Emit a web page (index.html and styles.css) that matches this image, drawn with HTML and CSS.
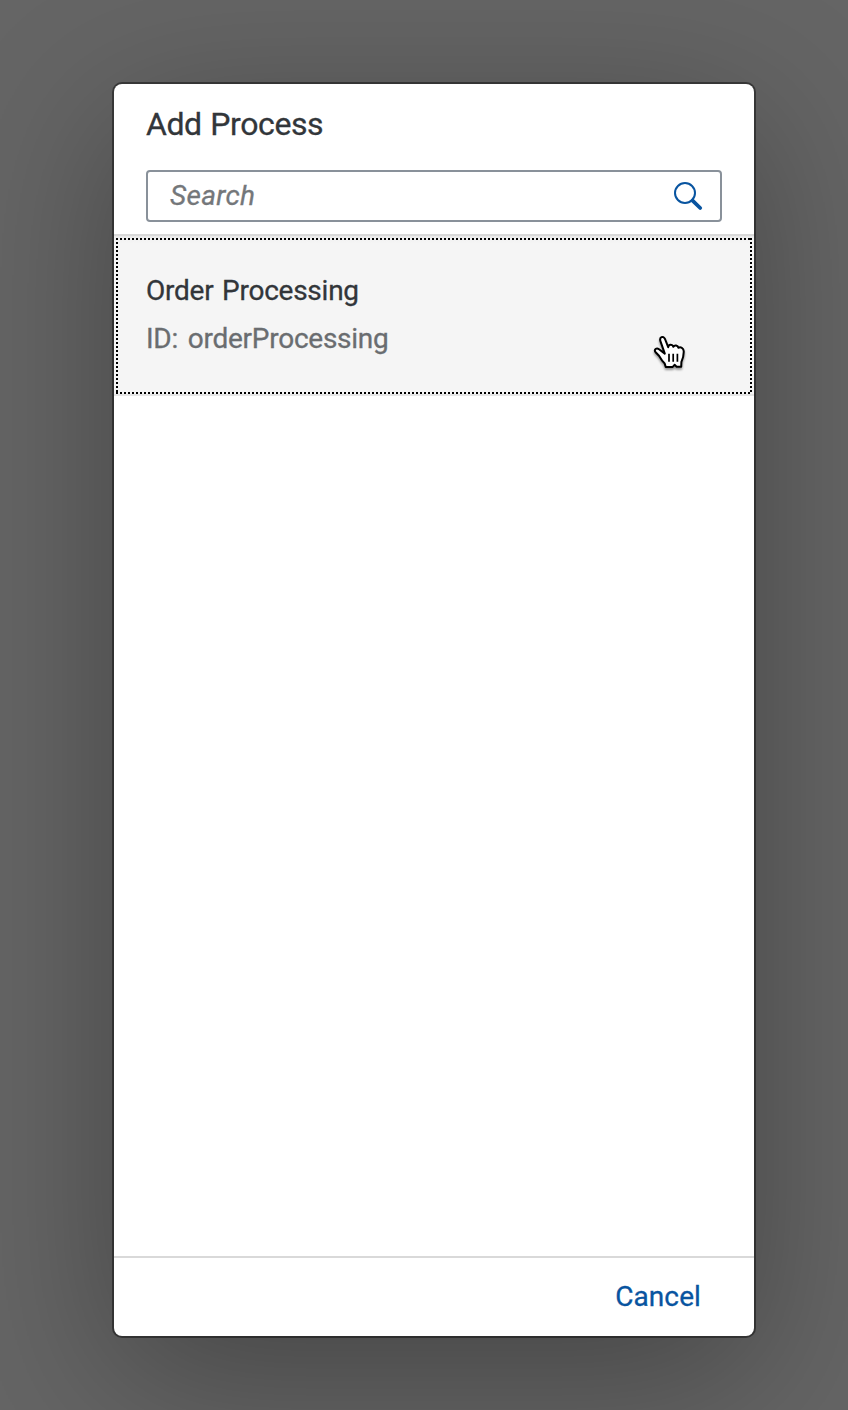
FILE: index.html
```html
<!DOCTYPE html>
<html lang="en">
<head>
<meta charset="utf-8">
<title>Add Process</title>
<link rel="stylesheet" href="styles.css">
</head>
<body class="overlay">
<section class="dialog" role="dialog" aria-labelledby="dialog-title">
  <header class="dialog-header">
    <h1 class="dialog-title" id="dialog-title">Add Process</h1>
    <div class="search-field">
      <span class="search-placeholder">Search</span>
      <svg class="search-icon" width="32" height="32" viewBox="0 0 32 32" aria-hidden="true">
        <circle cx="13" cy="13" r="10" fill="none" stroke="#0854a0" stroke-width="2"/>
        <path d="M20.6 20.6L28.2 28" fill="none" stroke="#0854a0" stroke-width="3.8" stroke-linecap="round"/>
      </svg>
    </div>
  </header>
  <main class="dialog-content">
    <div class="list-item">
      <div class="item-focus">
        <div class="item-title">Order Processing</div>
        <div class="item-id">ID: orderProcessing</div>
      </div>
      <svg class="cursor" width="40" height="44" viewBox="0 0 40 44" aria-hidden="true">
        <path d="M14.8 23.6L10.5 11.4C9 7.2 13.2 5.2 15 9L18.2 17.2C18.5 14.2 22.4 14 23.4 16.8C24.6 14.6 27.8 15.2 28.4 17.8C30.6 16.6 33.6 18 33.7 21C34 26 32.7 29 31.4 31.8L31.2 36.7H26.6L24.6 34.8L22.7 36.9H15.7L14.7 33.6C12.4 31.5 10.5 28.4 9 25.8L5.6 22.2C3.6 19.6 6.5 17.4 9 19.2Z" fill="#fff" stroke="#000" stroke-width="2" stroke-linejoin="round"/>
        <path d="M19 23.8V31.8M23.2 23.8V31.8M27.4 23.8V31.8" fill="none" stroke="#000" stroke-width="1.7"/>
      </svg>
    </div>
  </main>
  <footer class="dialog-footer">
    <button class="cancel-button" type="button">Cancel</button>
  </footer>
</section>
</body>
</html>
```
FILE: styles.css
```css
* {
  box-sizing: border-box;
}

.overlay {
  margin: 0;
  height: 1410px;
  padding: 84px 94px 74px 114px;
  background: #656565;
  font-family: Roboto, "Liberation Sans", sans-serif;
  font-size: 28px;
  -webkit-text-stroke: 0.3px currentColor;
  overflow: hidden;
}

.dialog {
  display: flex;
  flex-direction: column;
  height: 1252px;
  background: #fff;
  border-radius: 8px;
  box-shadow: 0 0 0 2px rgba(0, 0, 0, 0.42), 0 40px 160px rgba(0, 0, 0, 0.32);
}

.dialog-header {
  height: 152px;
  padding: 0 32px;
  border-bottom: 2px solid #d9d9d9;
}

.dialog-title {
  margin: 0;
  height: 86px;
  line-height: 80px;
  font-size: 32px;
  font-weight: 400;
  letter-spacing: -0.4px;
  word-spacing: 1px;
  color: #32363a;
}

.search-field {
  display: flex;
  align-items: center;
  justify-content: space-between;
  height: 52px;
  padding: 0 16px 0 22px;
  border: 2px solid #89919a;
  border-radius: 4px;
}

.search-placeholder {
  font-style: italic;
  line-height: 48px;
  letter-spacing: 0.3px;
  color: #74777a;
}

.search-icon {
  display: block;
}

.dialog-content {
  flex: 1;
}

.list-item {
  position: relative;
  height: 160px;
  padding: 2px;
  border-bottom: 2px solid #e5e5e5;
  background: linear-gradient(#e8e8e8, #f2f2f2 3px, #f5f5f5 8px);
}

/* Square-dot focus ring, 2px dots on a 4px pitch */
.item-focus {
  height: 156px;
  padding: 29px 30px 27px;
  background:
    repeating-linear-gradient(90deg, #000 0 2px, transparent 2px 4px) 0 0 / 100% 2px no-repeat,
    repeating-linear-gradient(90deg, #000 0 2px, transparent 2px 4px) 0 100% / 100% 2px no-repeat,
    repeating-linear-gradient(#000 0 2px, transparent 2px 4px) 0 0 / 2px 100% no-repeat,
    repeating-linear-gradient(#000 0 2px, transparent 2px 4px) 100% 0 / 2px 100% no-repeat;
}

.item-title,
.item-id {
  line-height: 48px;
  letter-spacing: -0.25px;
}

.item-title {
  word-spacing: 2px;
  color: #32363a;
}

.item-id {
  word-spacing: 3px;
  color: #6a6d70;
}

.cursor {
  position: absolute;
  left: 536px;
  top: 94px;
  filter: drop-shadow(0 2px 1px rgba(0, 0, 0, 0.4));
}

.dialog-footer {
  display: flex;
  align-items: center;
  justify-content: flex-end;
  height: 80px;
  padding: 0 32px;
  border-top: 2px solid #d9d9d9;
}

.cancel-button {
  padding: 0 21px 0 20px;
  border: 0;
  background: none;
  font: inherit;
  line-height: 52px;
  letter-spacing: 0.1px;
  color: #0854a0;
}
```
